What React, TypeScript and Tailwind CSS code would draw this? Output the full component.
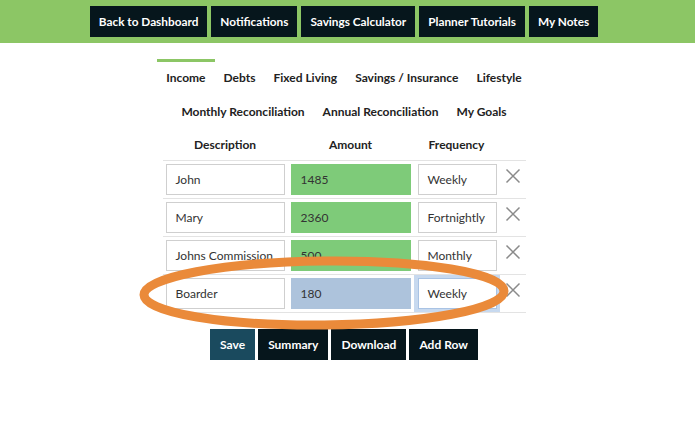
import React from "react";

const font = { fontFamily: "Lato, 'Noto Sans', sans-serif" };

function XIcon() {
  return (
    <svg width="16" height="16" viewBox="0 0 16 16" className="block">
      <path d="M1.5 1.5 L14.5 14.5 M14.5 1.5 L1.5 14.5" stroke="#8a8a8a" strokeWidth="1.5" fill="none" />
    </svg>
  );
}

type Row = { d: string; a: string; f: string; sel?: boolean };
const rows: Row[] = [
  { d: "John", a: "1485", f: "Weekly" },
  { d: "Mary", a: "2360", f: "Fortnightly" },
  { d: "Johns Commission", a: "500", f: "Monthly" },
  { d: "Boarder", a: "180", f: "Weekly", sel: true },
];

export default function App() {
  return (
    <div className="w-[695px] h-[441px] bg-white relative overflow-hidden text-[#222]" style={font}>
      <div className="h-[43px] bg-[#8cc665] flex items-center justify-center gap-[4px] pr-[7px]">
        {["Back to Dashboard", "Notifications", "Savings Calculator", "Planner Tutorials", "My Notes"].map((t) => (
          <div key={t} className="h-[31px] px-[9px] flex items-center bg-[#06161c] text-white text-[11.8px] font-bold whitespace-nowrap">
            {t}
          </div>
        ))}
      </div>

      <div className="pr-[7px]">
        <div className="flex justify-center mt-[16px]">
          {["Income", "Debts", "Fixed Living", "Savings / Insurance", "Lifestyle"].map((t, i) => (
            <div
              key={t}
              className={
                "h-[34px] px-[9px] flex items-center text-[12px] font-bold text-[#222] whitespace-nowrap border-t-[3px] " +
                (i === 0 ? "border-[#8cc665]" : "border-transparent")
              }
            >
              {t}
            </div>
          ))}
        </div>
        <div className="flex justify-center -mt-[1px]">
          {["Monthly Reconciliation", "Annual Reconciliation", "My Goals"].map((t) => (
            <div key={t} className="h-[36px] px-[9px] flex items-center text-[12px] font-bold text-[#222] whitespace-nowrap border-t-[3px] border-transparent">
              {t}
            </div>
          ))}
        </div>

        <div className="mx-auto w-[363px] mt-[2px]">
          <div className="flex h-[31px] items-center text-[12px] font-bold text-[#222] border-b border-[#e3e3e3]">
            <div className="w-[125px] text-center">Description</div>
            <div className="w-[126px] text-center">Amount</div>
            <div className="w-[86px] text-center">Frequency</div>
            <div className="w-[26px]" />
          </div>
          {rows.map((r) => (
            <div key={r.d} className="flex h-[38px] items-center border-b border-[#e3e3e3] text-[12px] text-[#333]">
              <div className="w-[125px] px-[3px]">
                <div className="h-[31px] border border-[#cfcfcf] flex items-center pl-[9px] whitespace-nowrap overflow-hidden">{r.d}</div>
              </div>
              <div className="w-[126px] px-[3px]">
                <div
                  className={
                    "h-[31px] flex items-center pl-[10px] " + (r.sel ? "bg-[#adc3dc]" : "bg-[#7ecb79]")
                  }
                >
                  {r.a}
                </div>
              </div>
              <div className={"w-[86px] h-full flex items-center pl-[4px] pr-[3px] " + (r.sel ? "bg-[#c7d9ef]" : "")}>
                <div
                  className={
                    "h-[31px] w-full flex items-center pl-[9px] bg-white border whitespace-nowrap " +
                    (r.sel ? "border-[#a9c3e4]" : "border-[#cfcfcf]")
                  }
                >
                  {r.f}
                </div>
              </div>
              <div className="w-[26px] flex justify-center -mt-[8px]">
                <XIcon />
              </div>
            </div>
          ))}
          <div className="flex justify-center gap-[3px] mt-[16px]">
            {["Save", "Summary", "Download", "Add Row"].map((t, i) => (
              <div
                key={t}
                className={
                  "h-[31px] px-[10px] flex items-center text-white text-[12px] font-bold " +
                  (i === 0 ? "bg-[#1a4a5e]" : "bg-[#06161c]")
                }
              >
                {t}
              </div>
            ))}
          </div>
        </div>
      </div>

      <svg className="absolute left-0 top-0 pointer-events-none" width="695" height="441" viewBox="0 0 695 441">
        <ellipse cx="324" cy="293" rx="180" ry="32" fill="none" stroke="#ea8a3a" strokeWidth="9" transform="rotate(-0.6 324 293)" />
      </svg>
    </div>
  );
}
